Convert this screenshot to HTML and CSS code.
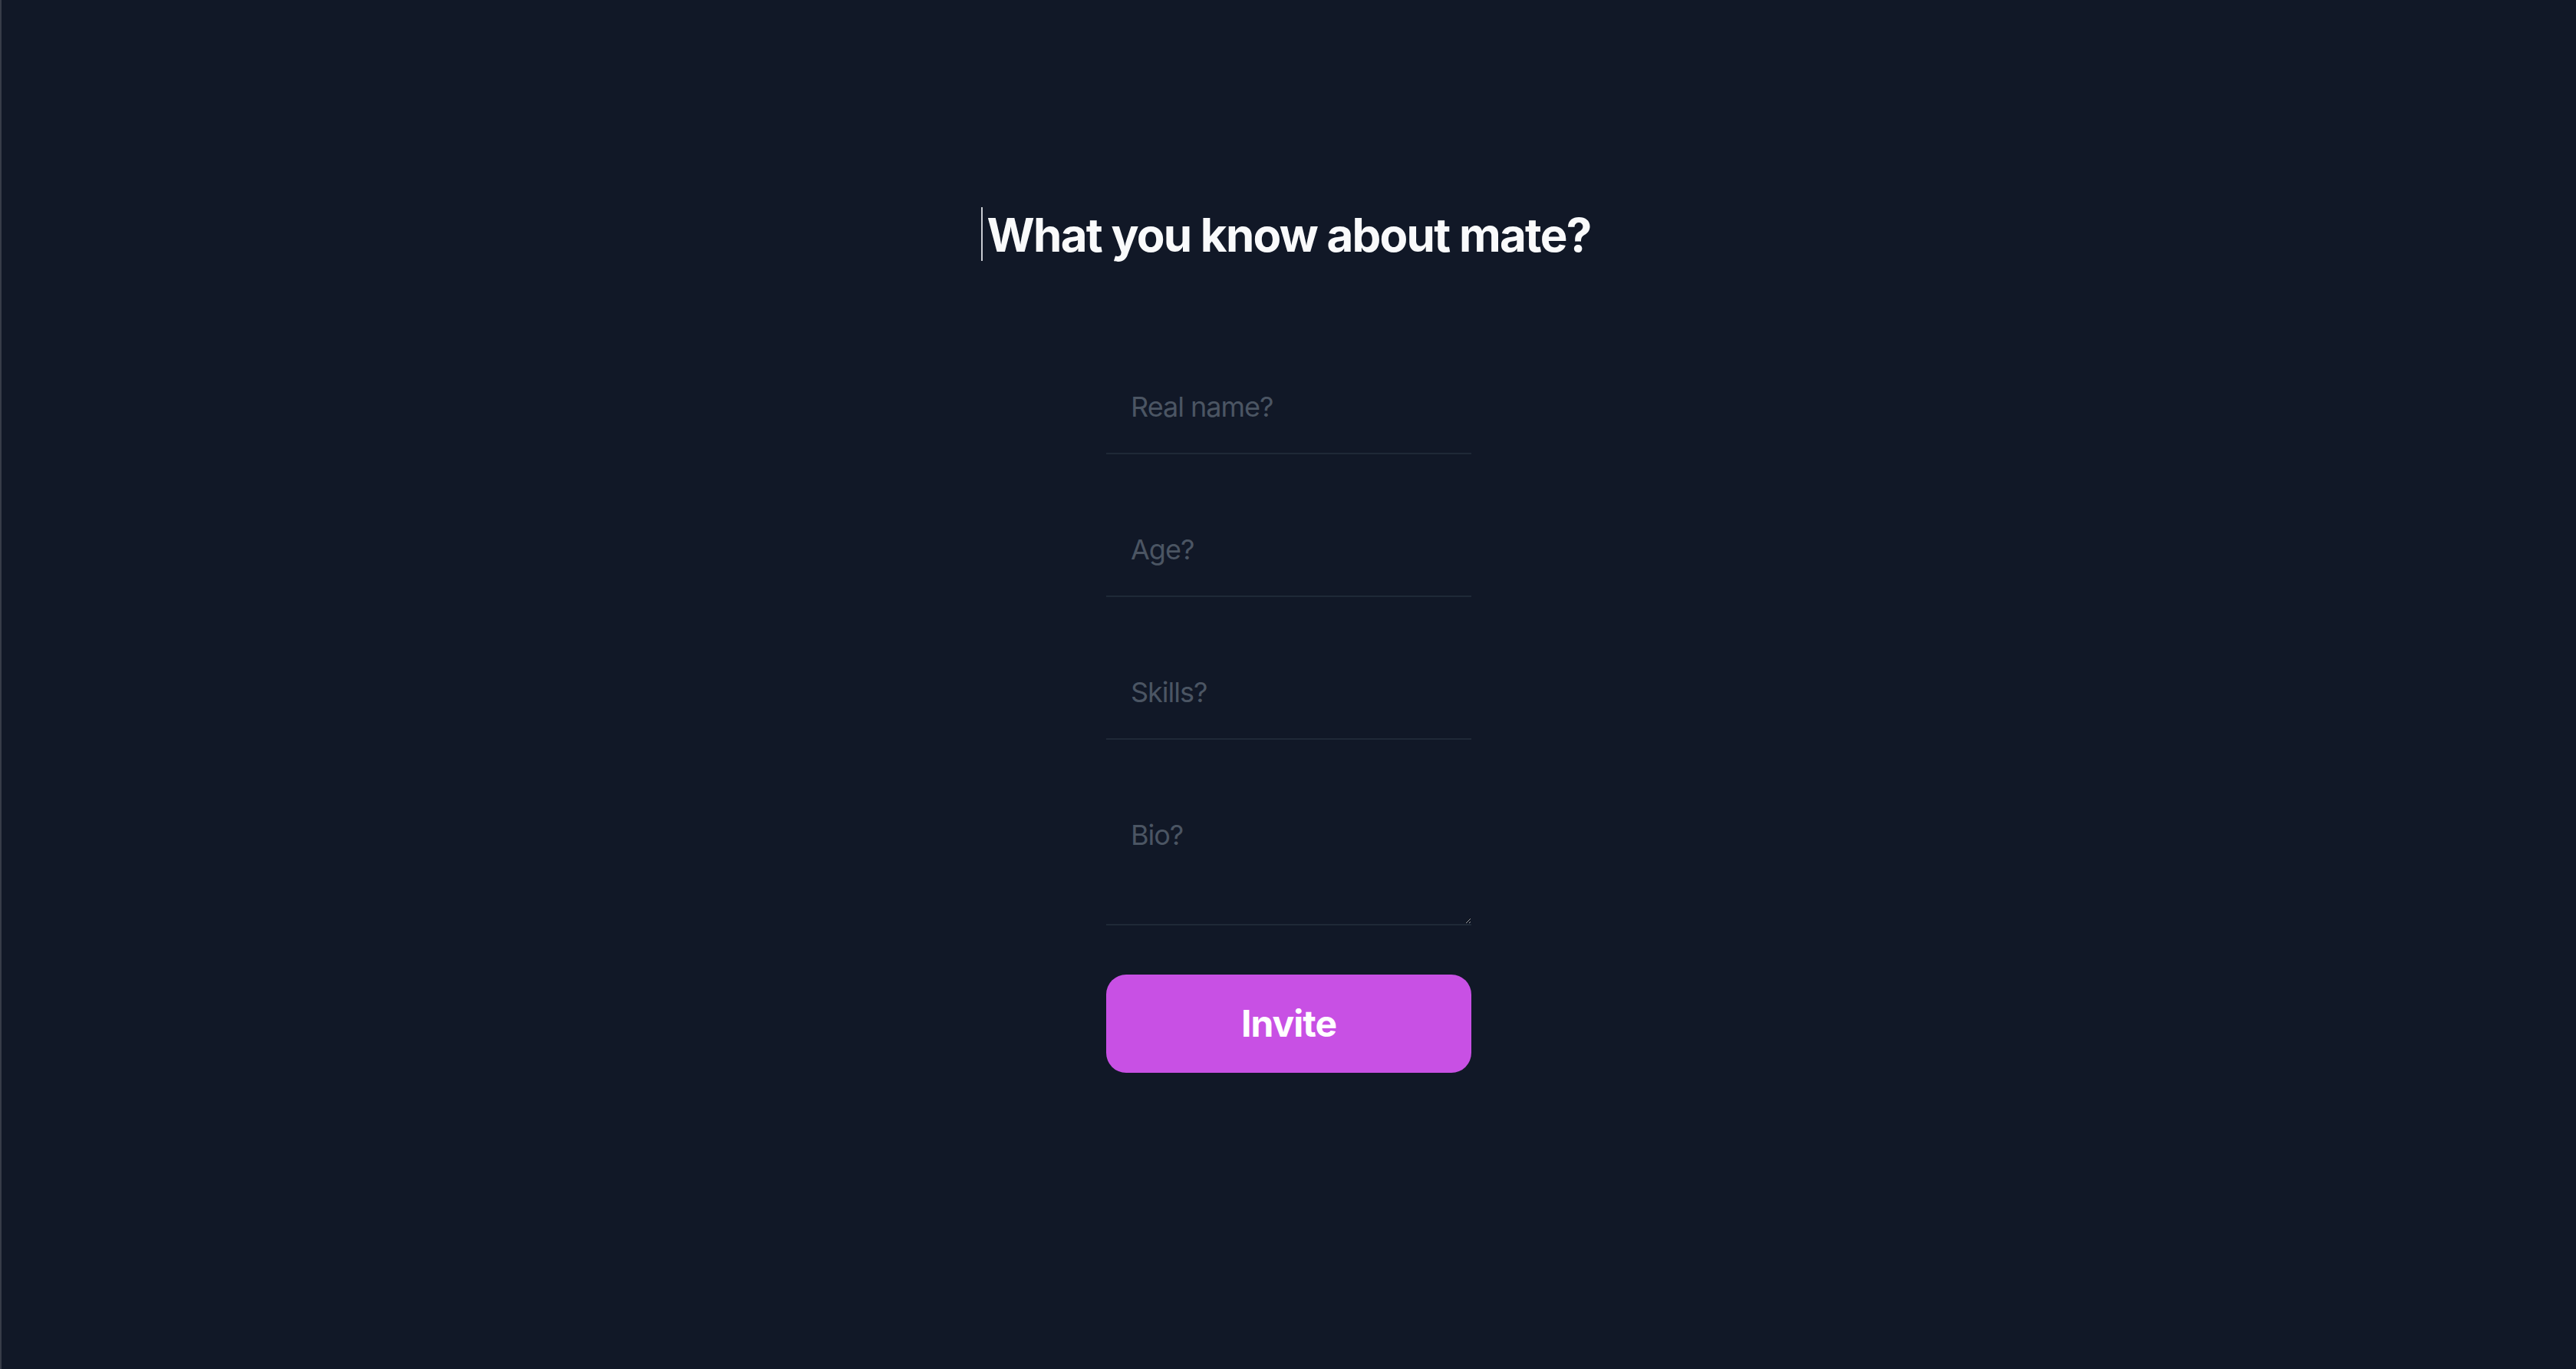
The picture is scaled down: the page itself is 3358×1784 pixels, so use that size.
FILE: index.html
```html
<!DOCTYPE html>
<html lang="en">
<head>
<meta charset="utf-8">
<title>Invite mate</title>
<link rel="stylesheet" href="styles.css">
</head>
<body>
<div class="page">
  <h1 class="title"><span class="caret"></span>What you know about mate?</h1>
  <form class="form">
    <input class="field" type="text" placeholder="Real name?">
    <input class="field" type="text" placeholder="Age?">
    <input class="field" type="text" placeholder="Skills?">
    <textarea class="field area" rows="2" placeholder="Bio?"></textarea>
    <button class="invite" type="button">Invite</button>
  </form>
</div>
</body>
</html>
```
FILE: styles.css
```css
html, body {
  margin: 0;
  padding: 0;
  background: #111827;
}
body {
  font-family: Inter, "Noto Sans", sans-serif;
}
.page {
  box-sizing: border-box;
  min-height: 100vh;
  border-left: 2px solid #373c48;
  display: flex;
  flex-direction: column;
  align-items: center;
  padding-top: 270px;
}
.title {
  margin: 0;
  font-size: 60px;
  line-height: 72px;
  font-weight: 700;
  letter-spacing: -1.75px;
  color: #f9fafb;
  text-align: center;
}
.caret {
  display: inline-block;
  width: 2px;
  height: 70px;
  background: #c9ccd2;
  vertical-align: top;
  margin-left: -8px;
  margin-right: 6px;
}
.form {
  width: 476px;
  margin-top: 128px;
  display: flex;
  flex-direction: column;
  gap: 64px;
}
.field {
  box-sizing: border-box;
  display: block;
  width: 100%;
  margin: 0;
  padding: 32px 32px;
  font-family: Inter, "Noto Sans", sans-serif;
  font-size: 36px;
  line-height: 56px;
  letter-spacing: -1px;
  height: 122px;
  color: #e5e7eb;
  background: transparent;
  border: 0;
  border-bottom: 2px solid #1f2937;
  outline: none;
  border-radius: 0;
}
.field::placeholder {
  color: #4b5563;
}
.area {
  height: 178px;
  resize: vertical;
  color-scheme: dark;
}
.invite {
  display: block;
  width: 100%;
  height: 128px;
  border: 0;
  border-radius: 26px;
  background: #c850e4;
  color: #ffffff;
  font-family: Inter, "Noto Sans", sans-serif;
  font-size: 48px;
  line-height: 64px;
  font-weight: 700;
  letter-spacing: -1px;
  padding: 32px;
  cursor: pointer;
}
```
